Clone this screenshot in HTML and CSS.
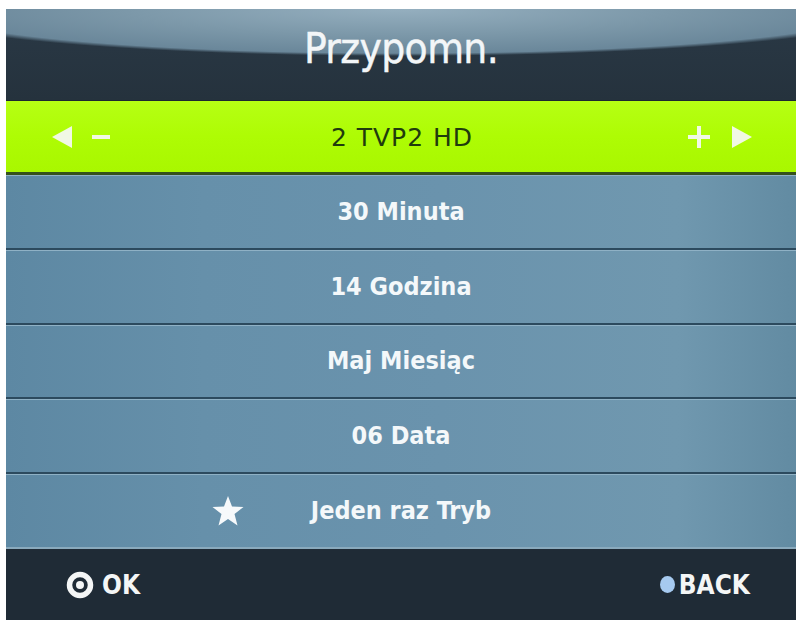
FILE: index.html
```html
<!DOCTYPE html>
<html lang="pl">
<head>
<meta charset="utf-8">
<title>Przypomn.</title>
<link rel="stylesheet" href="styles.css">
</head>
<body>
<div class="screen">
  <header class="header">
    <h1 class="title">Przypomn.</h1>
  </header>
  <div class="selected">
    <div class="side side-left">
      <svg class="tri" width="20" height="22" viewBox="0 0 20 22"><polygon points="20,0 20,22 0,11"/></svg>
      <svg class="sign" width="18" height="18" viewBox="0 0 18 18"><rect x="0" y="7" width="18" height="4"/></svg>
    </div>
    <div class="sel-text">2 TVP2 HD</div>
    <div class="side side-right">
      <svg class="sign" width="22" height="22" viewBox="0 0 22 22"><rect x="0" y="9" width="22" height="4"/><rect x="9" y="0" width="4" height="22"/></svg>
      <svg class="tri" width="20" height="22" viewBox="0 0 20 22"><polygon points="0,0 0,22 20,11"/></svg>
    </div>
  </div>
  <div class="rows">
    <div class="row"><span class="row-text">30 Minuta</span></div>
    <div class="row"><span class="row-text">14 Godzina</span></div>
    <div class="row"><span class="row-text">Maj Miesiąc</span></div>
    <div class="row"><span class="row-text">06 Data</span></div>
    <div class="row row-star">
      <svg class="star" width="32" height="30" viewBox="0 0 32 30"><polygon points="16,0 20,10.5 31.5,11 22.5,18 25.5,29.5 16,23 6.5,29.5 9.5,18 0.5,11 12,10.5"/></svg>
      <span class="row-text">Jeden raz Tryb</span>
      <span></span>
    </div>
  </div>
  <footer class="footer">
    <div class="key">
      <svg class="ring" width="28" height="28" viewBox="0 0 28 28"><circle cx="14" cy="14" r="10.5" fill="none" stroke="#f4f6f6" stroke-width="5.5"/><circle cx="14" cy="14" r="4" fill="#f4f6f6"/></svg>
      <span class="key-text">OK</span>
    </div>
    <div class="key key-back">
      <span class="dot"></span>
      <span class="key-text">BACK</span>
    </div>
  </footer>
</div>
</body>
</html>
```
FILE: styles.css
```css
html, body {
  margin: 0;
  padding: 0;
  background: #ffffff;
}
body {
  width: 801px;
  height: 620px;
  overflow: hidden;
}
.screen {
  margin: 9px 0 0 6px;
  width: 790px;
  height: 611px;
  display: flex;
  flex-direction: column;
  background: #26343f;
}
.header {
  height: 92px;
  flex: none;
  box-sizing: border-box;
  background:
    radial-gradient(500px 47px at 50% 0, #95afbf 0%, #7c98a9 55%, #6a879a 94%, rgba(38,52,63,0) 100%),
    linear-gradient(180deg, #2a3946 0%, #25323d 100%);
  border-bottom: 1px solid #1c2731;
  display: flex;
  justify-content: center;
}
.title {
  margin: 0;
  padding-top: 15px;
  font-family: "DejaVu Sans Condensed", "DejaVu Sans", sans-serif;
  font-weight: normal;
  font-size: 42px;
  line-height: 50px;
  color: #f3f6f8;
  letter-spacing: -0.6px;
  -webkit-text-stroke: 0.4px #f3f6f8;
}
.selected {
  height: 71px;
  flex: none;
  background: linear-gradient(180deg, #b6ff14 0%, #aefc04 50%, #a9f700 100%);
  border-bottom: 3px solid #35501c;
  display: grid;
  grid-template-columns: 1fr auto 1fr;
  align-items: center;
  padding: 0 44px 0 46px;
}
.side {
  display: flex;
  align-items: center;
}
.side-left { gap: 20px; justify-self: start; }
.side-right { gap: 22px; justify-self: end; }
.tri, .sign { fill: #f1f8e4; }
.sel-text {
  font-family: "DejaVu Sans", sans-serif;
  font-size: 25px;
  letter-spacing: 1px;
  color: #203b0d;
  padding-top: 2px;
}
.rows {
  flex: 1;
  display: flex;
  flex-direction: column;
}
.row {
  flex: 1;
  display: flex;
  align-items: center;
  justify-content: center;
  border-bottom: 2px solid #2c4a5e;
  box-shadow: inset 0 1px 0 #8fb1c5;
  background: linear-gradient(90deg, #5d88a3 0%, #6690aa 25%, #6a93ad 55%, #7098af 85%, #628ba2 100%);
}
.row:last-child {
  border-bottom: 2px solid #8aaabd;
}
.row-text {
  font-family: "DejaVu Sans Condensed", "DejaVu Sans", sans-serif;
  font-weight: bold;
  font-size: 25px;
  color: #f4f8fa;
}
.row-star {
  display: grid;
  grid-template-columns: 1fr auto 1fr;
  align-items: center;
}
.star {
  justify-self: end;
  margin-right: 67px;
  fill: #f6f9fb;
}
.footer {
  height: 71px;
  flex: none;
  box-sizing: border-box;
  background: #1f2b36;
  display: flex;
  align-items: center;
  justify-content: space-between;
  padding: 0 46px 0 60px;
}
.key {
  display: flex;
  align-items: center;
  gap: 8px;
}
.key-back { gap: 4px; }
.key-text {
  font-family: "DejaVu Sans Condensed", "DejaVu Sans", sans-serif;
  font-weight: bold;
  font-size: 26px;
  color: #f4f6f6;
}
.dot {
  width: 15px;
  height: 17px;
  border-radius: 50%;
  background: #a6caf0;
}
```
